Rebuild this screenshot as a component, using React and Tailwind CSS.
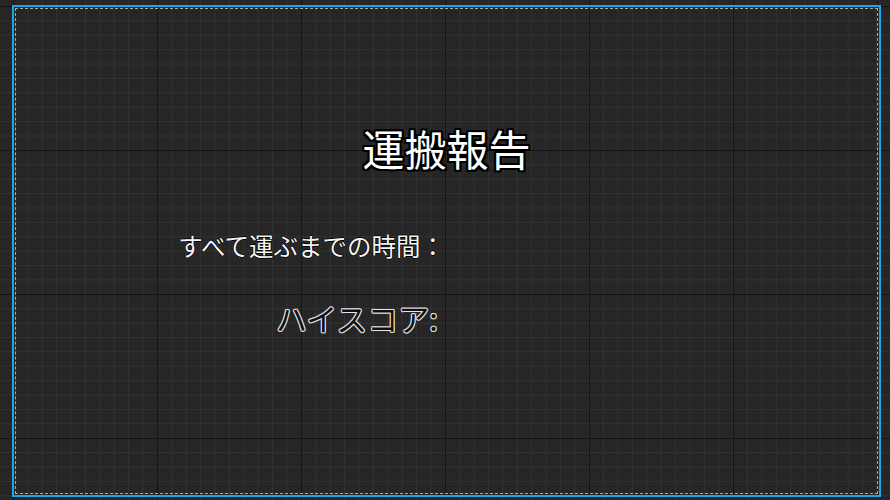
import React from "react"

const jp = "font-['Noto_Sans_CJK_JP','Noto_Sans',sans-serif]"

export default function App() {
  return (
    <div className="w-[890px] h-[500px] overflow-hidden bg-[#262626] [background-image:linear-gradient(to_right,#141414_1px,transparent_1px),linear-gradient(to_bottom,#141414_1px,transparent_1px),linear-gradient(to_right,#323232_1px,transparent_1px),linear-gradient(to_bottom,#323232_1px,transparent_1px)] [background-size:144px_144px,144px_144px,14.4px_14.4px,14.4px_14.4px] [background-position:13px_6px] pt-[5px] pl-[12px]">
      {/* selection frame */}
      <div className="w-[869px] h-[492px] border-2 border-[#1aa6ea] p-px">
        <div className={`h-full border border-dashed border-[#a8a8a8] flex flex-col ${jp}`}>
          <h1 className="mt-[118px] text-center text-[42px] leading-[42px] font-normal text-white [text-shadow:2px_0_0_#000,-2px_0_0_#000,0_2px_0_#000,0_-2px_0_#000,2px_2px_0_#000,-2px_-2px_0_#000,2px_-2px_0_#000,-2px_2px_0_#000]">
            運搬報告
          </h1>

          <div className="w-[429px] flex flex-col items-end">
            <p className="mt-[64px] text-[24.5px] leading-[25px] text-[#f4f4f4] [text-shadow:1px_0_0_#000,-1px_0_0_#000,0_1px_0_#000,0_-1px_0_#000,0_0_2px_#9a9a9a]">
              すべて運ぶまでの時間：
            </p>
            <p className="mt-[44px] mr-[7px] text-[31px] leading-[31px] text-[#101010] [text-shadow:1px_0_0_#e6e6e6,-1px_0_0_#e6e6e6,0_1px_0_#e6e6e6,0_-1px_0_#e6e6e6,1px_1px_0_#b0b0b0,-1px_-1px_0_#b0b0b0,1px_-1px_0_#b0b0b0,-1px_1px_0_#b0b0b0]">
              ハイスコア:
            </p>
          </div>
        </div>
      </div>
    </div>
  )
}
